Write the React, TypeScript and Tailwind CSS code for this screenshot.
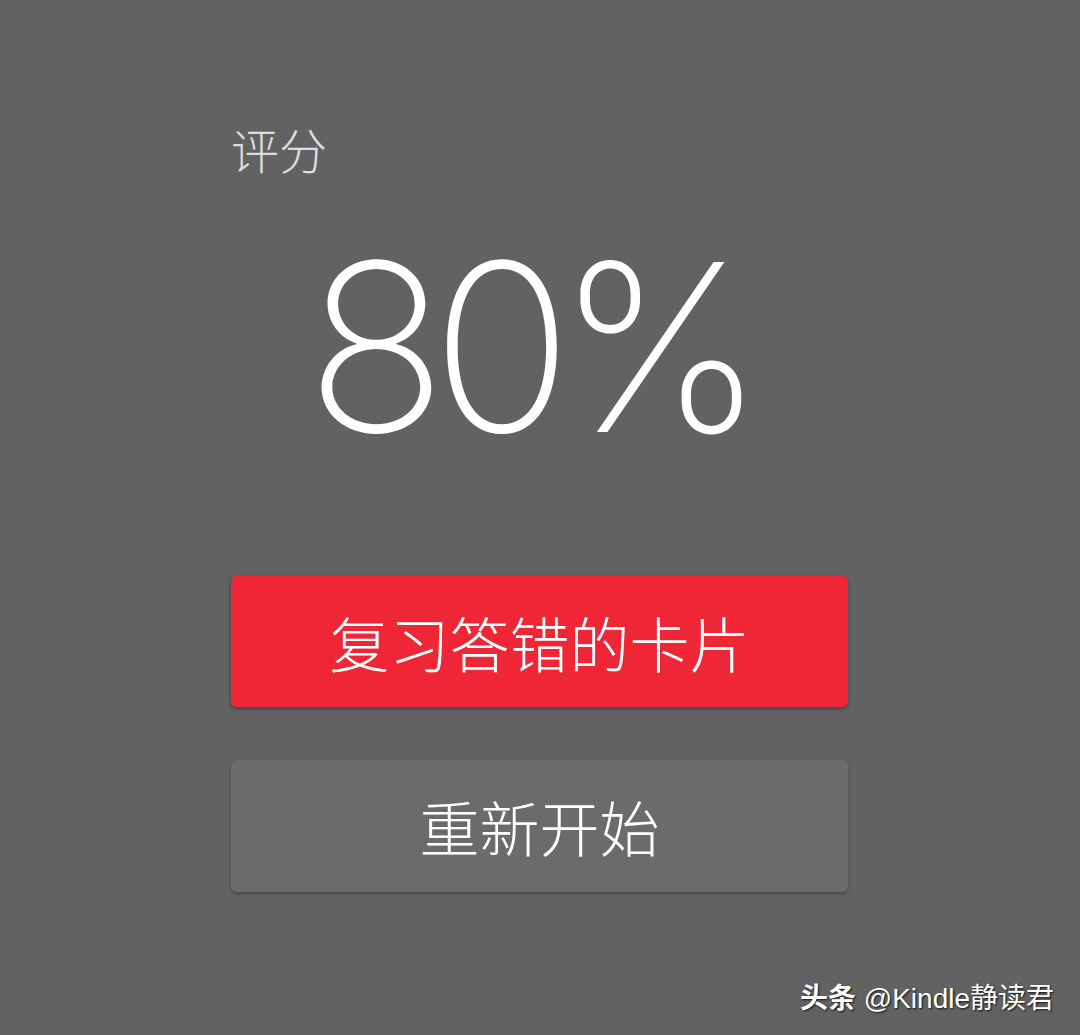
export default function App() {
  return (
    <div className="relative h-[1035px] w-[1080px] overflow-hidden bg-[#626262] font-['Noto_Sans_CJK_SC',sans-serif]">
      <div className="ml-[231px] flex w-[617px] flex-col pt-[124px]">
        <p className="text-[48px] font-light leading-none text-[#dcdcdc]">评分</p>
        <p className="mt-[58px] pr-[24px] text-center font-['Inter',sans-serif] text-[234px] font-extralight leading-none tracking-[-16px] text-white">
          80%
        </p>
        <button
          type="button"
          className="mt-[112px] flex h-[131px] items-center justify-center rounded-[6px] bg-[#ee2636] text-[60px] font-light text-white shadow-[0_2px_4px_rgba(0,0,0,0.35)]"
        >
          复习答错的卡片
        </button>
        <button
          type="button"
          className="mt-[53px] flex h-[132px] items-center justify-center rounded-[6px] bg-[#6b6b6b] text-[60px] font-light text-white shadow-[0_2px_3px_rgba(0,0,0,0.25)]"
        >
          重新开始
        </button>
      </div>
      <p className="absolute bottom-[22px] right-[26px] font-['Liberation_Sans','Noto_Sans_CJK_SC',sans-serif] text-[28px] leading-none text-white [text-shadow:1px_1px_2px_rgba(0,0,0,0.8)]">
        <span className="font-bold">头条</span> @Kindle静读君
      </p>
    </div>
  );
}
